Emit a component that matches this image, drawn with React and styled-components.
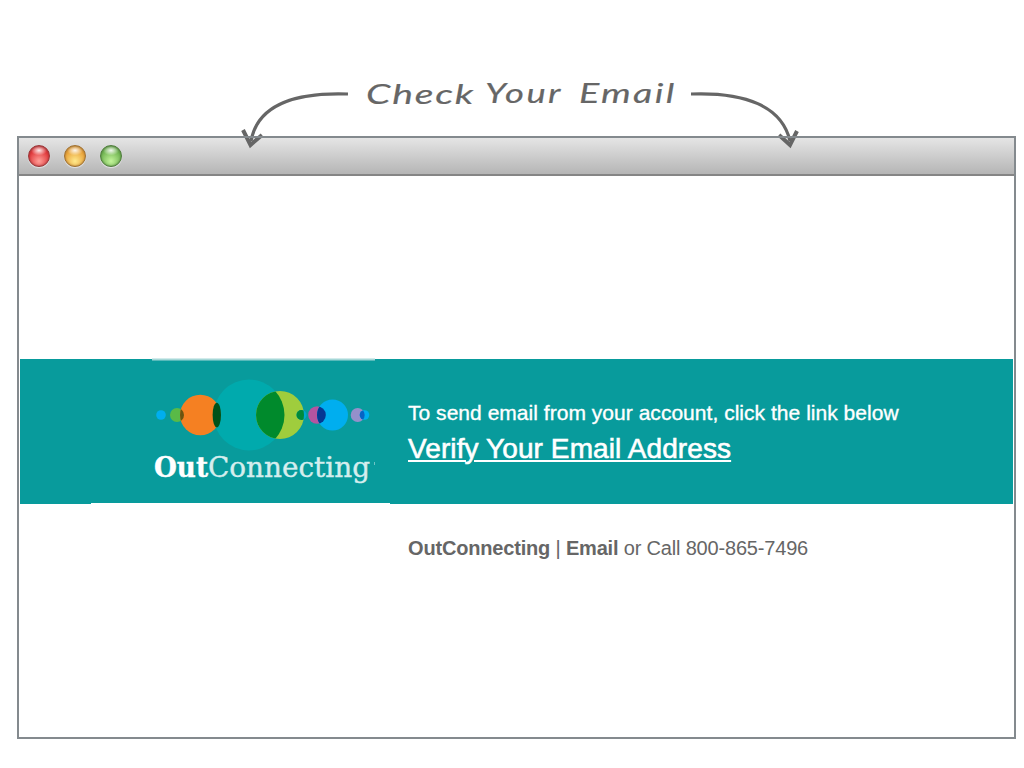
import React from 'react';
import styled, { createGlobalStyle } from 'styled-components';

const GlobalStyle = createGlobalStyle`
* { box-sizing:border-box; }
body {
margin:0;
background:#fff;
font-family:"Liberation Sans", Arial, sans-serif;
}
`;

const Page = styled.div`
position:relative;
width:1024px;
height:768px;
padding:136px 8px 29px 17px;
overflow:hidden;
`;

const Doodle = styled.svg`
position:absolute;
left:230px;
top:65px;
z-index:1;
`;

const Handwriting = styled.text`
font-family:Lato, "Open Sans", sans-serif;
font-style:italic;
font-size:27px;
fill:#666;
`;

const Window = styled.div`
position:relative;
height:603px;
padding:2px;
&::after{
    content:"";
    position:absolute;
    inset:0;
    z-index:2;
    border:2px solid #848a8e;
    pointer-events:none;
}
`;

const TitleBar = styled.div`
display:flex;
align-items:center;
gap:14px;
height:38px;
padding:0 9px;
background:linear-gradient(#e5e5e5, #b5b5b5);
border-bottom:2px solid #858585;
`;

const Light = styled.span`
width:22px;
height:22px;
border-radius:50%;
border:1px solid ${({ $rim }) => $rim};
background:
    radial-gradient(ellipse 8px 5px at 50% 22%, rgba(255,255,255,.9), rgba(255,255,255,0)),
    radial-gradient(circle at 50% 75%, ${({ $glow }) => $glow} 0, ${({ $color }) => $color} 62%, ${({ $rim }) => $rim} 110%);
box-shadow:0 1px 1px rgba(255,255,255,.6), inset 0 0 2px ${({ $rim }) => $rim};
`;

const Banner = styled.section`
display:flex;
height:145px;
margin:183px 1px 0;
background:#089b9c;
`;

const LogoCell = styled.div`
width:299px;
height:144px;
margin-left:71px;
padding-left:61px;
background:#089b9c;
box-shadow:0 1px 0 #fff;
`;

const LogoArt = styled.svg`
display:block;
overflow:visible;
`;

const LogoText = styled.text`
font-family:"DejaVu Serif", serif;
font-size:28px;
font-weight:${({ $bold }) => ($bold ? 700 : 400)};
fill:${({ $bold }) => ($bold ? '#fff' : '#d5eeee')};
stroke:${({ $bold }) => ($bold ? '#fff' : '#d5eeee')};
stroke-width:.4px;
`;

const Message = styled.div`
padding:41px 0 0 18px;
color:#fff;
white-space:nowrap;
`;

const Lead = styled.p`
margin:0;
font-size:21px;
line-height:26px;
letter-spacing:.03px;
-webkit-text-stroke:.35px #fff;
`;

const VerifyLink = styled.a`
display:inline-block;
font-size:28px;
line-height:36px;
margin-top:5px;
letter-spacing:.1px;
color:#fff;
-webkit-text-stroke:.6px #fff;
text-decoration:underline;
text-decoration-thickness:2px;
text-underline-offset:2px;
`;

const Contact = styled.p`
margin:32px 0 0 389px;
font-size:20px;
line-height:24px;
letter-spacing:-.18px;
color:#666;
white-space:nowrap;
`;

const lights = [
    { color: '#e0383b', glow: '#ff9f98', rim: '#9a3537' },
    { color: '#e9a33a', glow: '#ffe98c', rim: '#a0702f' },
    { color: '#72b553', glow: '#c4f59b', rim: '#4e7d3b' },
];

const Logo = () => (
    <LogoArt width="224" height="144" viewBox="152 359 224 144">
        <path d="M152 359.5H375" stroke="#a5d7d7" strokeWidth="2" />
        <defs>
            <clipPath id="orange"><circle cx="200.3" cy="415" r="20.3" /></clipPath>
            <clipPath id="lime"><circle cx="280" cy="415" r="24" /></clipPath>
            <clipPath id="blue"><circle cx="332.5" cy="415" r="15.5" /></clipPath>
            <clipPath id="sky"><circle cx="364.5" cy="415" r="4.8" /></clipPath>
        </defs>
        <circle cx="161" cy="415" r="4.8" fill="#00aeef" />
        <circle cx="177" cy="415" r="7" fill="#59ba47" />
        <circle cx="249" cy="415" r="35.5" fill="#00aaad" />
        <circle cx="200.3" cy="415" r="20.3" fill="#f58022" />
        <circle cx="177" cy="415" r="7" fill="#6b5410" clipPath="url(#orange)" />
        <ellipse cx="216.8" cy="415" rx="4.2" ry="12.3" fill="#005219" />
        <circle cx="280" cy="415" r="24" fill="#9fcd3d" />
        <circle cx="249" cy="415" r="35.5" fill="#008a2c" clipPath="url(#lime)" />
        <circle cx="301.5" cy="415" r="5" fill="#00a9d0" />
        <circle cx="301.5" cy="415" r="5" fill="#008a3a" clipPath="url(#lime)" />
        <circle cx="317" cy="415" r="8.8" fill="#b554a0" />
        <circle cx="332.5" cy="415" r="15.5" fill="#00aeef" />
        <circle cx="317" cy="415" r="8.8" fill="#063892" clipPath="url(#blue)" />
        <circle cx="357.7" cy="415" r="7" fill="#9590cb" />
        <circle cx="364.5" cy="415" r="4.8" fill="#00aeef" />
        <circle cx="357.7" cy="415" r="7" fill="#0764c4" clipPath="url(#sky)" />
        <LogoText $bold x="154" y="477" textLength="54" lengthAdjust="spacingAndGlyphs">Out</LogoText>
        <LogoText x="208" y="477" textLength="162" lengthAdjust="spacingAndGlyphs">Connecting</LogoText>
        <path d="M374.5 462v3" stroke="#6fc4c5" />
    </LogoArt>
);

// each word is drawn at the origin and stretched sideways
const CheckEmailNote = () => (
    <Doodle width="600" height="90" viewBox="230 65 600 90" fill="none" stroke="#666">
        <path d="M348 94C290 92 257 108 251 141" strokeWidth="3.2" />
        <path d="M243 130L250.5 145L262 135" strokeWidth="4" />
        <path d="M691 94C745 92 782 106 790 141" strokeWidth="3.2" />
        <path d="M779 135L790 145L797 131" strokeWidth="4" />
        <g strokeWidth=".15">
            <Handwriting transform="translate(366 103.500) scale(1.45 1)" textLength="74">Check</Handwriting>
            <Handwriting transform="translate(485 103) scale(1.35 1)" textLength="56">Your</Handwriting>
            <Handwriting transform="translate(579 103) scale(1.4 1)" textLength="68">Email</Handwriting>
        </g>
    </Doodle>
);

const App = () => {
    return (
        <>
            <GlobalStyle />
            <Page>
                <CheckEmailNote />
                <Window>
                    <TitleBar>
                        {lights.map((light, index) => (
                            <Light key={index} $color={light.color} $glow={light.glow} $rim={light.rim} />
                        ))}
                    </TitleBar>
                    <Banner>
                        <LogoCell>
                            <Logo />
                        </LogoCell>
                        <Message>
                            <Lead>To send email from your account, click the link below</Lead>
                            <VerifyLink href="#">Verify Your Email Address</VerifyLink>
                        </Message>
                    </Banner>
                    <Contact>
                        <b>OutConnecting</b> | <b>Email</b> or Call 800-865-7496
                    </Contact>
                </Window>
            </Page>
        </>
    );
}

export default App;
